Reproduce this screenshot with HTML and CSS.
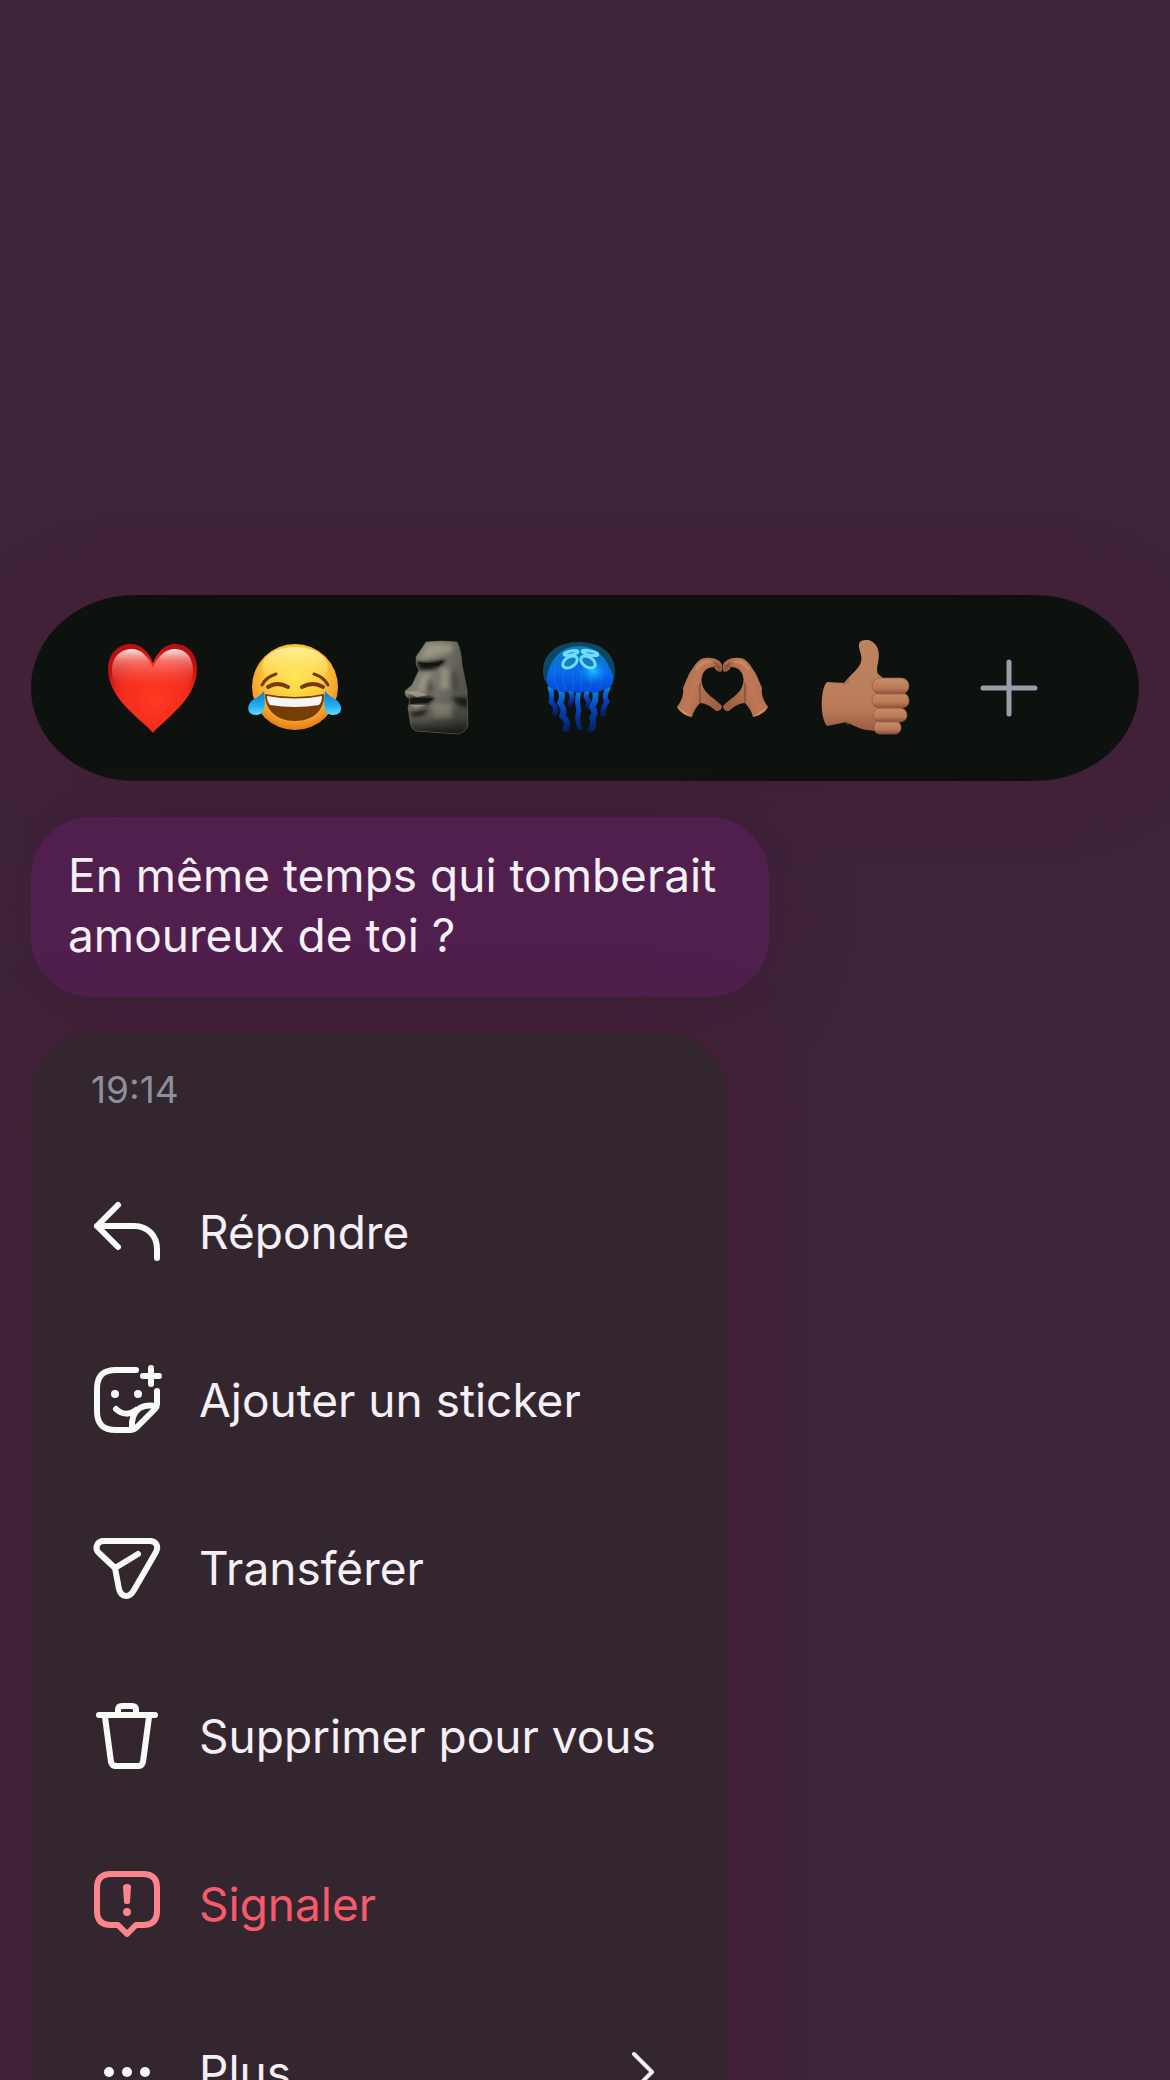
FILE: index.html
```html
<!DOCTYPE html>
<html lang="fr">
<head>
  <meta charset="UTF-8">
  <meta name="viewport" content="width=device-width, initial-scale=1.0">
  <title>Message</title>
  <link rel="stylesheet" href="styles.css">
</head>
<body>
  <main class="screen">
    <!-- Reactions -->
    <div class="reactions">
      <button class="reaction" aria-label="Coeur">
        <svg viewBox="0 0 96 96">
          <defs>
            <radialGradient id="heart" cx=".52" cy=".62" r=".6">
              <stop offset="0" stop-color="#ff3a22"/>
              <stop offset=".65" stop-color="#f22a1c"/>
              <stop offset="1" stop-color="#bd0f0f"/>
            </radialGradient>
            <linearGradient id="shine" x1="0" y1="0" x2="0" y2="1">
              <stop offset="0" stop-color="#fff" stop-opacity=".9"/>
              <stop offset=".3" stop-color="#ff9488" stop-opacity=".7"/>
              <stop offset="1" stop-color="#ff4030" stop-opacity="0"/>
            </linearGradient>
          </defs>
          <path fill="url(#heart)" d="M49 93C39 80 4 60 4 29C4 14 14 4 27 4C37 4 45 12 49 23C53 12 61 4 71 4C84 4 93 14 93 29C93 60 59 80 49 93Z"/>
          <path fill="url(#shine)" d="M49 28C45 17 37 9 28 9C16 9 8 18 8 30C8 39 11 45 15 50H82C86 45 89 38 89 30C89 18 82 9 71 9C61 9 53 17 49 28Z"/>
        </svg>
      </button>
      <button class="reaction" aria-label="Rire">
        <svg viewBox="0 0 96 96">
          <defs>
            <radialGradient id="face" cx=".5" cy=".38" r=".64">
              <stop offset="0" stop-color="#ffe352"/>
              <stop offset=".5" stop-color="#fbcb3c"/>
              <stop offset=".8" stop-color="#f6a02b"/>
              <stop offset="1" stop-color="#e07413"/>
            </radialGradient>
            <linearGradient id="faceTop" x1="0" y1="0" x2="0" y2="1">
              <stop offset="0" stop-color="#fff5a2" stop-opacity=".9"/>
              <stop offset="1" stop-color="#ffe75c" stop-opacity="0"/>
            </linearGradient>
            <linearGradient id="tear" x1="0" y1="0" x2="0" y2="1">
              <stop offset="0" stop-color="#0f77c9"/>
              <stop offset=".6" stop-color="#20aef2"/>
              <stop offset="1" stop-color="#65d8ff"/>
            </linearGradient>
          </defs>
          <circle cx="48" cy="47" r="43" fill="url(#face)"/>
          <ellipse cx="48" cy="27" rx="33" ry="20" fill="url(#faceTop)"/>
          <g fill="none" stroke="#743a08" stroke-width="3" stroke-linecap="round">
            <path d="M15 45Q19 37 29 34M81 45Q77 37 67 34"/>
            <path stroke-width="4" d="M21 47Q30 41 41 47M55 47Q66 41 76 47"/>
          </g>
          <path fill="#783d07" d="M18 54Q48 60 77 54C78 70 66 81 48 81C30 81 18 70 18 54Z"/>
          <path fill="#f4f5f5" d="M20 56Q48 61 75 56C75 60 74 63 72 65Q48 69 23 65C21 62 20 60 20 56Z"/>
          <path fill="url(#tear)" d="M17 51C18 61 20 75 9 75C-1 75-1 64 7 59C12 56 15 54 17 51Z"/>
          <path fill="url(#tear)" d="M78 51C77 61 75 75 86 75C97 75 96 64 88 59C83 56 80 54 78 51Z"/>
        </svg>
      </button>
      <button class="reaction" aria-label="Moai">
        <svg viewBox="0 0 96 96">
          <defs>
            <linearGradient id="stone" x1="0" y1="0" x2="1" y2=".3">
              <stop offset="0" stop-color="#858273"/>
              <stop offset=".5" stop-color="#7c796e"/>
              <stop offset="1" stop-color="#55544c"/>
            </linearGradient>
            <linearGradient id="stoneShade" x1="0" y1="0" x2="0" y2="1">
              <stop offset=".6" stop-color="#161815" stop-opacity="0"/>
              <stop offset=".82" stop-color="#161815" stop-opacity=".3"/>
              <stop offset="1" stop-color="#111310" stop-opacity=".95"/>
            </linearGradient>
            <filter id="soft" x="-20%" y="-20%" width="140%" height="140%"><feGaussianBlur stdDeviation="2"/></filter>
            <path id="moai" d="M36 2Q52 0 67 2Q71 9 72 25L77 50L78 85Q76 92 68 94L26 91Q20 88 20 80L18 68L19 64L20 59Q14 56 15 51L22 45L29 30L26 24L26 17Z"/>
            <clipPath id="moaiClip"><use href="#moai"/></clipPath>
          </defs>
          <use href="#moai" fill="url(#stone)"/>
          <g clip-path="url(#moaiClip)">
            <g filter="url(#soft)">
              <path fill="#aba691" opacity=".6" d="M37 4H62V12L31 19ZM32 35L41 32L37 50L27 53ZM43 64H62V78H43ZM51 28H59V49H50ZM20 63L37 64L25 69Z"/>
              <path fill="#171814" d="M25 21Q41 23 56 19L52 26L40 31L29 30ZM17 57L41 56L45 60L37 65L19 65ZM20 72L39 69L34 75L22 77ZM62 57L79 58V67Q68 68 62 57Z"/>
              <path fill="#353530" opacity=".6" d="M39 36L35 48L38 54L45 51ZM60 36L66 29L69 48L65 56Z"/>
            </g>
            <path fill="#131510" d="M27 22Q42 25 55 20L48 26L33 26ZM19 58L44 58L37 63L20 64Z"/>
            <path fill="#aaa48d" d="M15 52L26 51L38 55L27 57ZM18 65L37 65L26 68Z" opacity=".75"/>
          </g>
          <use href="#moai" fill="url(#stoneShade)" stroke="#6c706a" stroke-opacity=".5"/>
        </svg>
      </button>
      <button class="reaction" aria-label="Méduse">
        <svg viewBox="0 0 96 96">
          <defs>
            <linearGradient id="bell" x1="0" y1="0" x2="0" y2="1">
              <stop offset="0" stop-color="#0e81b4"/>
              <stop offset=".55" stop-color="#086be8"/>
              <stop offset="1" stop-color="#0746d8"/>
            </linearGradient>
            <linearGradient id="tentacle" x1="0" y1="0" x2="0" y2="1">
              <stop offset="0" stop-color="#098ad5"/>
              <stop offset=".4" stop-color="#0a48c5"/>
              <stop offset="1" stop-color="#06216b"/>
            </linearGradient>
            <radialGradient id="glow">
              <stop offset="0" stop-color="#18c5ff"/>
              <stop offset="1" stop-color="#0b76f6" stop-opacity="0"/>
            </radialGradient>
          </defs>
          <g fill="none" stroke="url(#tentacle)" stroke-width="5" stroke-linecap="round" stroke-linejoin="round">
            <path d="M18 48Q21 55 19 62Q25 66 23 73"/>
            <path stroke-width="6" d="M28 49Q32 56 28 63Q34 71 30 76Q37 80 34 89"/>
            <path d="M38 50Q42 57 38 64"/>
            <path d="M47 51Q44 62 47 70Q44 80 48 88"/>
            <path d="M55 51L54 57Q58 62 56 66"/>
            <path stroke-width="6" d="M63 50Q65 61 60 67Q65 73 60 78Q63 84 59 89"/>
            <path d="M76 48Q71 56 75 62Q70 68 71 74"/>
          </g>
          <path fill="#0c4865" d="M11 31C11 13 26 2 47 2C68 2 83 13 83 31C83 39 80 44 76 47H18C14 43 11 39 11 31Z"/>
          <path fill="url(#bell)" d="M15 36C19 17 31 6 47 6C63 6 76 18 81 36C83 44 77 49 71 50Q62 55 54 51Q47 55 39 51Q31 54 25 50C18 50 13 44 15 36Z"/>
          <ellipse cx="61" cy="31" rx="16" ry="14" fill="url(#glow)"/>
          <path fill="none" stroke="#1598ff" stroke-opacity=".35" d="M24 24Q19 36 26 49M33 28Q29 40 34 50M41 31V50M49 31V50M57 30Q61 40 57 50M66 28Q73 38 67 49"/>
          <g fill="#127cc5" stroke="#6eddff" stroke-width="3">
            <ellipse cx="38" cy="22" rx="8" ry="5" transform="rotate(-33 38 22)"/>
            <ellipse cx="56" cy="22" rx="8" ry="5" transform="rotate(33 56 22)"/>
            <ellipse cx="39" cy="13" rx="7" ry="2" transform="rotate(-12 39 13)"/>
            <ellipse cx="58" cy="13" rx="8" ry="2" transform="rotate(12 58 13)"/>
          </g>
        </svg>
      </button>
      <button class="reaction" aria-label="Mains en coeur">
        <svg viewBox="0 0 96 96">
          <defs>
            <linearGradient id="hand" x1="0" y1="0" x2="1" y2=".5">
              <stop offset="0" stop-color="#ad6b4d"/>
              <stop offset=".5" stop-color="#bd7856"/>
              <stop offset="1" stop-color="#9f5e43"/>
            </linearGradient>
            <g id="halfHeart">
              <path fill="url(#hand)" d="M2 67C7 60 9 54 8 48L14 34C20 25 23 18 31 18C39 17 46 21 47 25Q48 31 45 32Q41 31 39 27C29 27 25 36 27 44C29 54 41 59 47 66Q47 71 41 71C36 66 30 63 25 63C21 67 18 72 17 77Q7 75 2 67Z"/>
              <path fill="none" stroke="#743e2d" stroke-width="2" stroke-linecap="round" d="M39 27Q43 25 45 31M40 23L45 27M25 44C24 51 26 56 25 62" opacity=".55"/>
              <path fill="none" stroke="#d79872" stroke-width="3" stroke-linecap="round" d="M22 29Q27 20 35 22" opacity=".5"/>
              <path fill="#d18b64" d="M2 67Q9 70 17 77Q7 75 2 67Z"/>
            </g>
          </defs>
          <use href="#halfHeart"/>
          <use href="#halfHeart" transform="translate(95) scale(-1 1)"/>
        </svg>
      </button>
      <button class="reaction" aria-label="Pouce levé">
        <svg viewBox="0 0 96 96">
          <defs>
            <linearGradient id="thumb" x1="0" y1="0" x2="0" y2="1">
              <stop offset="0" stop-color="#bd8460"/>
              <stop offset=".75" stop-color="#b97c59"/>
              <stop offset="1" stop-color="#995b43"/>
            </linearGradient>
            <linearGradient id="finger" x1="0" y1="0" x2="0" y2="1">
              <stop offset="0" stop-color="#c78f69"/>
              <stop offset=".65" stop-color="#b97957"/>
              <stop offset="1" stop-color="#8e4d3a"/>
            </linearGradient>
          </defs>
          <path fill="url(#thumb)" d="M9 42L26 43C33 34 41 29 43 22C45 15 40 9 41 4C42 0 46 0 51 0C61 4 62 13 60 23Q58 30 60 34L70 42V91H62C50 91 40 89 29 82L9 86C2 78 2 49 9 42Z"/>
          <path fill="none" stroke="#9d6248" stroke-width="2" opacity=".6" d="M25 44Q29 44 31 39M29 80Q27 83 31 84"/>
          <g fill="url(#finger)" stroke="#955940" stroke-opacity=".7">
            <rect x="56" y="81" width="27" height="13" rx="6"/>
            <rect x="55" y="68" width="34" height="14" rx="7"/>
            <rect x="54" y="53" width="37" height="15" rx="7"/>
            <rect x="54" y="38" width="37" height="16" rx="8"/>
          </g>
        </svg>
      </button>
      <button class="reaction reaction-add" aria-label="Ajouter une réaction">
        <svg viewBox="0 0 96 96"><path d="M48 22V74M22 48H74"/></svg>
      </button>
    </div>

    <p class="bubble">En même temps qui tomberait amoureux de toi ?</p>

    <!-- Menu -->
    <div class="menu">
      <time class="menu-time">19:14</time>
      <button class="menu-item">
        <svg class="icon" viewBox="0 0 72 72">
          <path d="M27 9L6 30L27 51M6 30H43C57 30 66 40 66 53V62"/>
        </svg>
        <span>Répondre</span>
      </button>
      <button class="menu-item">
        <svg class="icon" viewBox="0 0 72 72">
          <path d="M45 6H25C12 6 6 12 6 25V47C6 60 12 66 25 66H40Q43 66 45 64L64 45Q66 43 66 40V27"/>
          <path d="M25 45C31 51 39 51 45 46M41 65V58C43 44 52 40 65 42"/>
          <path d="M60 4V20M52 12H68"/>
          <circle class="dot" cx="24" cy="30" r="4"/>
          <circle class="dot" cx="47" cy="30" r="4"/>
        </svg>
        <span>Ajouter un sticker</span>
      </button>
      <button class="menu-item">
        <svg class="icon" viewBox="0 0 72 72">
          <path d="M13 9H59C65 9 68 14 65 20L43 58C38 67 30 65 28 57L24 36L8 21C3 16 6 9 13 9ZM24 36L47 22"/>
        </svg>
        <span>Transférer</span>
      </button>
      <button class="menu-item">
        <svg class="icon" viewBox="0 0 72 72">
          <path d="M8 15H64M27 14V10Q27 6 31 6H41Q45 6 45 10V14M14 17L20 62Q21 66 25 66H47Q51 66 52 62L58 17"/>
        </svg>
        <span>Supprimer pour vous</span>
      </button>
      <button class="menu-item danger">
        <svg class="icon" viewBox="0 0 72 72">
          <path d="M20 6H52Q66 6 66 20V43Q66 57 52 57H45L36 66L27 57H20Q6 57 6 43V20Q6 6 20 6Z"/>
          <path class="dot" d="M32 19Q32 16 36 16Q40 16 40 19L39 34Q39 36 36 36Q33 36 33 34Z"/>
          <circle class="dot" cx="36" cy="44" r="4"/>
        </svg>
        <span>Signaler</span>
      </button>
      <button class="menu-item">
        <svg class="icon" viewBox="0 0 72 72">
          <circle class="dot" cx="18" cy="36" r="5"/>
          <circle class="dot" cx="36" cy="36" r="5"/>
          <circle class="dot" cx="54" cy="36" r="5"/>
        </svg>
        <span>Plus</span>
        <svg class="chevron" viewBox="0 0 24 48"><path d="M3 6L21 24L3 42"/></svg>
      </button>
    </div>
  </main>
</body>
</html>
```
FILE: styles.css
```css
* {
  box-sizing: border-box;
}

body {
  margin: 0;
  background: #40243c;
  color: #f5f0f6;
  font-family: Inter, "Liberation Sans", sans-serif;
}

button {
  margin: 0;
  padding: 0;
  border: none;
  background: none;
  color: inherit;
  font: inherit;
  cursor: pointer;
}

.screen {
  height: 100vh;
  overflow: hidden;
  padding: 595px 31px 0;
  display: flex;
  flex-direction: column;
  align-items: flex-start;
  gap: 36px;
}

/* Reactions */
.reactions {
  width: 100%;
  flex-shrink: 0;
  display: grid;
  grid-template-columns: repeat(7, 1fr);
  padding: 45px 59px 45px 50px;
  background: #0d120e;
  border-radius: 104px / 93px;
  box-shadow: 0 0 72px rgba(72, 28, 48, 0.7);
}

.reaction {
  display: flex;
  justify-content: center;
}

.reaction svg {
  width: 96px;
  height: 96px;
}

.reaction-add path {
  fill: none;
  stroke: #9a9daa;
  stroke-width: 5;
  stroke-linecap: round;
}

/* Message */
.bubble {
  flex-shrink: 0;
  width: 66.6%;
  margin: 0;
  padding: 28px 37px 32px;
  background: #511f4d;
  border-radius: 60px;
  box-shadow: 0 0 72px rgba(56, 28, 46, 0.8);
  font-size: 46px;
  line-height: 60px;
}

/* Menu */
.menu {
  flex-shrink: 0;
  width: 62.8%;
  padding-bottom: 24px;
  background: #34262f;
  border-radius: 64px;
  box-shadow: 0 0 72px rgba(72, 28, 48, 0.7);
}

.menu-time {
  display: block;
  padding: 36px 60px 37px;
  color: #8d8f9b;
  font-size: 37px;
  line-height: 42px;
}

.menu-item {
  width: 100%;
  height: 168px;
  padding: 0 72px 0 60px;
  display: flex;
  align-items: center;
  gap: 36px;
  font-size: 46px;
  line-height: 60px;
  white-space: nowrap;
}

.icon {
  flex: none;
  width: 72px;
  height: 72px;
  fill: none;
  stroke: #f8faf8;
  stroke-width: 6;
  stroke-linecap: round;
  stroke-linejoin: round;
}

.icon .dot {
  fill: #f8faf8;
  stroke: none;
}

.danger {
  color: #f65a6b;
}

.danger .icon {
  stroke: #fb858b;
}

.danger .icon .dot {
  fill: #fb858b;
}

.chevron {
  width: 24px;
  height: 48px;
  margin-left: auto;
  fill: none;
  stroke: #f5f0f6;
  stroke-width: 4;
  stroke-linecap: round;
  stroke-linejoin: round;
}
```
